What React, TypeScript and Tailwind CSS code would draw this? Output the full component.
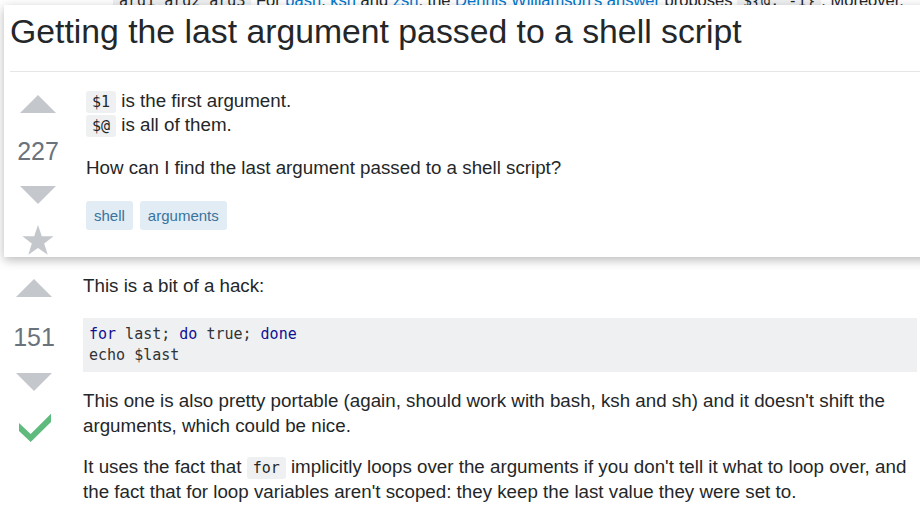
const sans = "font-['Liberation_Sans',Arial,sans-serif]";
const mono = "font-['DejaVu_Sans_Mono','Liberation_Mono',monospace]";

const UpArrow = () => (
  <div className="h-0 w-0 border-x-[18px] border-b-[18px] border-x-transparent border-b-[#c4c8cc]" />
);

const DownArrow = () => (
  <div className="h-0 w-0 border-x-[18px] border-t-[18px] border-x-transparent border-t-[#c4c8cc]" />
);

const Star = () => (
  <svg width="32" height="31" viewBox="0 0 32 31">
    <polygon
      points="16,0 19.8,11.2 31.6,11.3 22.2,18.4 25.7,29.7 16,22.9 6.3,29.7 9.8,18.4 0.4,11.3 12.2,11.2"
      fill="#c4c8cc"
    />
  </svg>
);

const Check = () => (
  <svg width="34" height="30" viewBox="0 0 34 30">
    <polygon points="1,10 12.7,21 33,0.7 33,9 12.7,29 1,18" fill="#5eba7d" />
  </svg>
);

const Code = ({ children }: { children: React.ReactNode }) => (
  <code className={`${mono} rounded-[3px] bg-[#eff0f1] px-[6px] py-[2px] text-[15px] leading-none text-[#242729]`}>
    {children}
  </code>
);

const Tag = ({ label }: { label: string }) => (
  <span className="flex h-[29px] items-center rounded-[3px] bg-[#e1ecf4] px-[8px] text-[15px] text-[#39739d]">
    {label}
  </span>
);

export default function App() {
  return (
    <div className={`${sans} relative h-[530px] w-[920px] overflow-hidden bg-white text-[18.75px] leading-[25px] text-[#242729]`}>
      {/* text of the post above, mostly hidden behind the sticky header */}
      <div className="mt-[-12px] whitespace-nowrap pl-[113px] text-[16.5px]">
        <Code>arg1 arg2 arg3</Code> For <a className="text-[#0077cc]">bash</a>,{" "}
        <a className="text-[#0077cc]">ksh</a> and <a className="text-[#0077cc]">zsh</a>, the{" "}
        <a className="text-[#0077cc]">Dennis Williamson's answer</a> proposes <Code>{"${@: -1}"}</Code>. Moreover,
      </div>

      {/* answer */}
      <div className="mt-[260px] flex">
        <div className="flex w-[68px] flex-col items-center">
          <div className="mt-[6px]">
            <UpArrow />
          </div>
          <div className="mt-[25px] text-[25px] leading-[30px] text-[#6a737c]">151</div>
          <div className="mt-[21px]">
            <DownArrow />
          </div>
          <div className="mt-[22px] pl-[2px]">
            <Check />
          </div>
        </div>
        <div className="ml-[15px] w-[834px]">
          <p>This is a bit of a hack:</p>
          <pre className={`${mono} mt-[20px] bg-[#eff0f1] px-[6px] py-[6px] text-[15px] leading-[21px] text-[#303336]`}>
            <span className="text-[#101094]">for</span> last; <span className="text-[#101094]">do</span> true;{" "}
            <span className="text-[#101094]">done</span>
            {"\n"}echo $last
          </pre>
          <p className="mt-[16px]">
            This one is also pretty portable (again, should work with bash, ksh and sh) and it doesn't shift the
            arguments, which could be nice.
          </p>
          <p className="mt-[16px]">
            It uses the fact that <Code>for</Code> implicitly loops over the arguments if you don't tell it what to
            loop over, and the fact that for loop variables aren't scoped: they keep the last value they were set to.
          </p>
        </div>
      </div>

      {/* sticky question header */}
      <div className="absolute left-[4px] top-[5px] w-[940px] bg-white shadow-[0_3px_10px_rgba(0,0,0,0.28)]">
        <div className="ml-[6px] border-b border-[#e4e6e8] pb-[20px] pt-[6px]">
          <h1 className="text-[33.75px] leading-[40px] text-[#242729]">Getting the last argument passed to a shell script</h1>
        </div>
        <div className="flex pt-[17px]">
          <div className="flex w-[68px] flex-col items-center pb-[1px]">
            <div className="mt-[6px]">
              <UpArrow />
            </div>
            <div className="mt-[23px] text-[25px] leading-[30px] text-[#6a737c]">227</div>
            <div className="mt-[20px]">
              <DownArrow />
            </div>
            <div className="mt-[21px]">
              <Star />
            </div>
          </div>
          <div className="ml-[14px] leading-[24px]">
            <p>
              <Code>$1</Code> is the first argument.
              <br />
              <Code>$@</Code> is all of them.
            </p>
            <p className="mt-[19px]">How can I find the last argument passed to a shell script?</p>
            <div className="mt-[21px] flex gap-[7px]">
              <Tag label="shell" />
              <Tag label="arguments" />
            </div>
          </div>
        </div>
      </div>
    </div>
  );
}
